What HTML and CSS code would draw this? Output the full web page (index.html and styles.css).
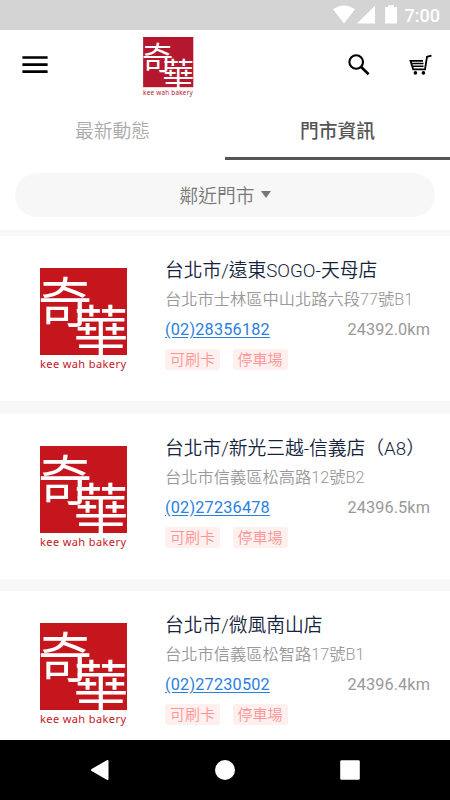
FILE: index.html
```html
<!DOCTYPE html>
<html lang="zh-Hant">
<head>
    <meta charset="UTF-8">
    <meta name="viewport" content="width=device-width, initial-scale=1.0">
    <title>門市資訊</title>
    <link rel="stylesheet" href="styles.css">
</head>
<body>
    <svg class="defs" width="0" height="0">
        <symbol id="logo" viewBox="0 0 88 104" overflow="visible">
            <rect width="87" height="87" fill="currentColor"/>
            <g class="logo-mark">
                <text x="-2" y="55" textLength="54" lengthAdjust="spacingAndGlyphs">奇</text>
                <text x="33.5" y="83" textLength="55" lengthAdjust="spacingAndGlyphs">華</text>
            </g>
            <text class="logo-name" x="0" y="100" textLength="87" fill="currentColor">kee wah bakery</text>
        </symbol>
    </svg>

    <div class="screen">
        <div class="status-bar">
            <svg width="66" height="20" viewBox="0 0 66 20" fill="#fff">
                <path d="M0 4.3Q11 -3.5 22 4.3L11 18.5Z"/>
                <path d="M24 18.5L42 .8V18.5Z"/>
                <path d="M52.2 2H55V.3H61V2H64V18.5H52.2Z"/>
            </svg>
            <span class="time">7:00</span>
        </div>

        <header>
            <svg class="menu" width="26" height="18" viewBox="0 0 26 18">
                <path d="M.4 1.5H25.6M.4 8.7H25.6M.4 15.7H25.6" stroke="#000" stroke-width="2.7"/>
            </svg>
            <svg class="logo logo-small"><use href="#logo"/></svg>
            <div class="actions">
                <svg width="22" height="22" viewBox="0 0 22 22" fill="none" stroke="#000">
                    <circle cx="8.2" cy="8" r="6.8" stroke-width="2.1"/>
                    <path d="M13.2 13L20.6 20.3" stroke-width="2.6"/>
                </svg>
                <svg width="24" height="22" viewBox="0 0 24 22" fill="none" stroke="#000">
                    <path d="M23.5 1.7L19 2.8L17 15.4H5.2L2.5 6.8H15" stroke-width="1.8"/>
                    <path d="M4.2 9.5H15.5M5 12.3H15.5" stroke-width="1.4"/>
                    <circle cx="7.4" cy="18.9" r="1.8" fill="#000" stroke="none"/>
                    <circle cx="15.4" cy="18.9" r="1.8" fill="#000" stroke="none"/>
                </svg>
            </div>
        </header>

        <nav class="tabs">
            <div class="tab">最新動態</div>
            <div class="tab active">門市資訊</div>
        </nav>

        <div class="filter">
            <div class="filter-btn">鄰近門市<span class="arrow"></span></div>
        </div>

        <main>
            <div class="store">
                <svg class="logo"><use href="#logo"/></svg>
                <div class="info">
                    <div class="name">台北市/遠東SOGO-天母店</div>
                    <div class="address">台北市士林區中山北路六段77號B1</div>
                    <div class="contact">
                        <a class="phone" href="tel:0228356182">(02)28356182</a>
                        <span>24392.0km</span>
                    </div>
                    <div class="tags">
                        <span class="tag">可刷卡</span>
                        <span class="tag">停車場</span>
                    </div>
                </div>
            </div>
            <div class="store">
                <svg class="logo"><use href="#logo"/></svg>
                <div class="info">
                    <div class="name">台北市/新光三越-信義店（A8）</div>
                    <div class="address">台北市信義區松高路12號B2</div>
                    <div class="contact">
                        <a class="phone" href="tel:0227236478">(02)27236478</a>
                        <span>24396.5km</span>
                    </div>
                    <div class="tags">
                        <span class="tag">可刷卡</span>
                        <span class="tag">停車場</span>
                    </div>
                </div>
            </div>
            <div class="store">
                <svg class="logo"><use href="#logo"/></svg>
                <div class="info">
                    <div class="name">台北市/微風南山店</div>
                    <div class="address">台北市信義區松智路17號B1</div>
                    <div class="contact">
                        <a class="phone" href="tel:0227230502">(02)27230502</a>
                        <span>24396.4km</span>
                    </div>
                    <div class="tags">
                        <span class="tag">可刷卡</span>
                        <span class="tag">停車場</span>
                    </div>
                </div>
            </div>
        </main>

        <footer class="nav-bar">
            <svg width="20" height="20" viewBox="0 0 20 20" fill="#fff">
                <path d="M1.6 9L16.8.3Q18.5-.3 18.5 1V19Q18.5 20.3 16.8 19.7L1.6 11Q.4 10 1.6 9Z"/>
            </svg>
            <svg width="20" height="20" viewBox="0 0 20 20" fill="#fff"><circle cx="10" cy="10" r="10"/></svg>
            <svg width="20" height="20" viewBox="0 0 20 20" fill="#fff"><rect x=".2" y=".2" width="19.6" height="19.6" rx="1.4"/></svg>
        </footer>
    </div>
</body>
</html>
```
FILE: styles.css
```css
* {
    margin: 0;
    padding: 0;
    box-sizing: border-box;
}

body {
    font-family: Roboto, "Noto Sans CJK TC", sans-serif;
    font-weight: 350;
    background: #fff;
    overflow: hidden;
}

svg {
    display: block;
    flex-shrink: 0;
}

.defs {
    position: absolute;
}

.screen {
    height: 800px;
    display: flex;
    flex-direction: column;
}

.status-bar {
    height: 30px;
    flex-shrink: 0;
    background: #d4d4d4;
    display: flex;
    justify-content: flex-end;
    align-items: center;
    gap: 6px;
    padding-right: 10px;
    color: #fff;
}

.time {
    font-size: 18px;
    font-weight: 500;
    line-height: 30px;
    padding-top: 2px;
}

header {
    height: 70px;
    flex-shrink: 0;
    display: grid;
    grid-template-columns: 121px 51px 1fr;
    align-items: center;
    padding: 0 18px 0 22px;
}

.logo {
    width: 88px;
    height: 104px;
    color: #c4161c;
    overflow: visible;
}

.logo-small {
    width: 51px;
    height: 60px;
    color: #b5172f;
    margin-top: 3px;
}

.logo-mark {
    font-size: 54px;
    font-weight: 400;
    fill: #fff;
}

.logo-name {
    font-family: "Noto Sans", sans-serif;
    font-size: 11px;
    font-weight: 400;
    letter-spacing: 1px;
}

.actions {
    display: flex;
    justify-content: flex-end;
    gap: 38px;
}

.tabs {
    height: 60px;
    flex-shrink: 0;
    display: flex;
}

.tab {
    flex: 1;
    text-align: center;
    font-size: 18.75px;
    line-height: 55px;
    padding-top: 5px;
    color: #aaa;
}

.tab.active {
    color: #555;
    font-weight: 500;
    border-bottom: 3px solid #555;
}

.filter {
    height: 70px;
    flex-shrink: 0;
    padding: 13px 15px 0;
}

.filter-btn {
    height: 44px;
    border-radius: 22px;
    background: #f7f7f7;
    display: flex;
    justify-content: center;
    align-items: center;
    gap: 6px;
    padding-bottom: 2px;
    font-size: 18.75px;
    color: #777;
}

.arrow {
    border: 5.5px solid transparent;
    border-top: 7px solid #777;
    border-bottom: 0;
}

main {
    flex: 1;
    overflow: hidden;
    background: #f8f8f8;
    padding-top: 6px;
}

.store {
    height: 165px;
    margin-bottom: 12.5px;
    background: #fff;
    display: flex;
    padding: 20px 20px 0 40px;
}

.store .logo {
    margin-top: 12px;
}

.info {
    flex: 1;
    margin-left: 37px;
    padding-top: 1px;
    font-size: 16.25px;
    color: #999;
    white-space: nowrap;
}

.name {
    font-size: 18.75px;
    line-height: 28px;
    color: #14233c;
}

.address {
    line-height: 29px;
}

.contact {
    display: flex;
    justify-content: space-between;
    line-height: 32px;
    font-weight: 400;
    letter-spacing: 0.1px;
}

.phone {
    color: #2b7fe0;
    letter-spacing: 0.2px;
    text-underline-offset: 2px;
}

.tags {
    display: flex;
    gap: 12.5px;
    margin-top: 3px;
}

.tag {
    width: 55px;
    height: 21px;
    border-radius: 3px;
    background: #fff0f0;
    color: #ff9494;
    font-size: 15px;
    line-height: 22px;
    text-align: center;
}

.nav-bar {
    height: 60px;
    flex-shrink: 0;
    background: #000;
    display: flex;
    justify-content: center;
    align-items: center;
    gap: 105px;
}
```
